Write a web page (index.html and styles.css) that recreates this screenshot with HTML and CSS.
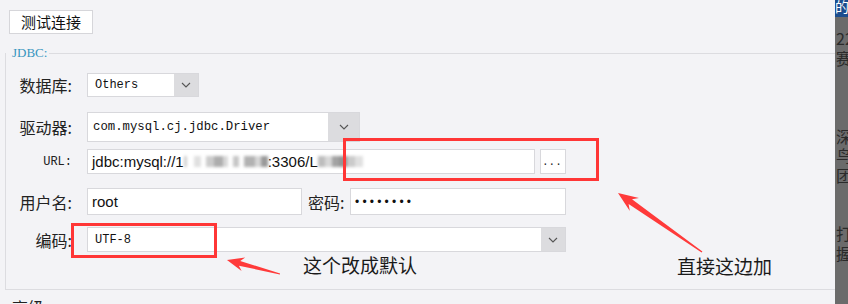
FILE: index.html
```html
<!DOCTYPE html>
<html lang="zh-CN">
<head>
    <meta charset="UTF-8">
    <meta name="viewport" content="width=device-width, initial-scale=1.0">
    <title>数据连接</title>
    <link rel="stylesheet" href="styles.css">
</head>
<body>
<div class="window">
    <div class="main">
        <button type="button" class="btn-test">测试连接</button>

        <fieldset class="group">
            <legend>JDBC:</legend>

            <div class="row row-db">
                <span class="label">数据库:</span>
                <div class="select select-db">
                    <span class="select-value">Others</span>
                    <span class="select-arrow">
                        <svg width="10" height="6" viewBox="0 0 10 6"><polyline points="1,1 5,5 9,1" fill="none" stroke="#555" stroke-width="1.1"/></svg>
                    </span>
                </div>
            </div>

            <div class="row row-driver">
                <span class="label">驱动器:</span>
                <div class="select select-driver">
                    <span class="select-value">com.mysql.cj.jdbc.Driver</span>
                    <span class="select-arrow">
                        <svg width="10" height="6" viewBox="0 0 10 6"><polyline points="1,1 5,5 9,1" fill="none" stroke="#555" stroke-width="1.1"/></svg>
                    </span>
                </div>
            </div>

            <div class="row row-url">
                <span class="label label-mono">URL:</span>
                <div class="field field-url">jdbc:mysql://1<span class="mosaic mosaic-host"></span>:3306/L<span class="mosaic mosaic-db"></span></div>
                <button type="button" class="btn-more">...</button>
            </div>

            <div class="row row-user">
                <span class="label">用户名:</span>
                <div class="field field-user">root</div>
                <span class="label-inline">密码:</span>
                <div class="field field-pass">••••••••</div>
            </div>

            <div class="row row-encoding">
                <span class="label">编码:</span>
                <div class="select select-encoding">
                    <span class="select-value">UTF-8</span>
                    <span class="select-arrow">
                        <svg width="10" height="6" viewBox="0 0 10 6"><polyline points="1,1 5,5 9,1" fill="none" stroke="#555" stroke-width="1.1"/></svg>
                    </span>
                </div>
            </div>
        </fieldset>

        <div class="section-title">高级</div>
    </div>

    <div class="side">
        <div class="side-head">的</div>
        <div class="side-text">22
赛



深
鸟
团


打
握</div>
    </div>

    <!-- screenshot annotations -->
    <svg class="marks" width="848" height="304" viewBox="0 0 848 304">
        <rect x="344.5" y="139.5" width="253" height="40" fill="none" stroke="#ff3636" stroke-width="3"/>
        <rect x="72.5" y="224.5" width="143" height="32" fill="none" stroke="#ff3636" stroke-width="3"/>
        <polygon fill="#ff3a3a" points="280.1,273.5 240.2,260.9 245.2,257.6 227,260 241.6,271.1 238.9,265.7 279.9,274.5"/>
        <polygon fill="#ff3a3a" points="702.4,251.4 632.0,199.2 639.0,197.9 618,193 629.8,211.0 628.6,204.1 701.6,252.6"/>
    </svg>
    <div class="note note-encoding">这个改成默认</div>
    <div class="note note-url">直接这边加</div>
</div>
</body>
</html>
```

FILE: styles.css
```css
* {
    box-sizing: border-box;
}

body {
    margin: 0;
    background: #f3f3f6;
    font-family: "Noto Sans CJK SC", sans-serif;
    color: #1e1e1e;
}

.window {
    position: relative;
    display: flex;
    height: 304px;
    overflow: hidden;
}

.main {
    flex: 1;
    min-width: 0;
    padding: 10px 0 0 5px;
}

.btn-test {
    display: block;
    margin-left: 4px;
    width: 84px;
    height: 24px;
    padding: 0;
    background: #fff;
    border: 1px solid #d6d6da;
    font: 15px/22px "Noto Sans CJK SC", sans-serif;
    color: #111;
}

/* JDBC group */
.group {
    margin: 12px 0 0 0;
    padding: 13px 0 37px 6px;
    border: 1px solid #dcdce0;
    border-right: none;
    min-width: 0;
}

.group legend {
    margin-left: -6px;
    padding: 0 2px 0 6px;
    font: 13px/14px "Liberation Serif", serif;
    color: #3796bf;
}

.row {
    display: flex;
    align-items: center;
}

.row-db { height: 24px; }
.row-driver { height: 30px; margin-top: 15px; }
.row-url { height: 25px; margin-top: 7px; }
.row-user { height: 27px; margin-top: 14px; }
.row-encoding { height: 25px; margin-top: 12px; }

.label {
    flex-shrink: 0;
    width: 60px;
    margin-right: 15px;
    text-align: right;
    font-size: 16px;
    color: #222;
}

.label-mono {
    font: 12px "Liberation Mono", monospace;
    color: #222;
}

.label-inline {
    width: 37px;
    margin: 0 5px 0 6px;
    font-size: 16px;
    color: #222;
}

/* combo boxes */
.select {
    display: flex;
    height: 100%;
    background: #fff;
    border: 1px solid #d8d8dc;
}

.select-db { width: 112px; }
.select-driver { width: 273px; }
.select-encoding { width: 479px; }

.select-value {
    flex: 1;
    display: flex;
    align-items: center;
    padding-left: 7px;
    font: 12px "Liberation Mono", monospace;
    color: #111;
}

.select-driver .select-value {
    padding-left: 5px;
    font-size: 12.3px;
}

.select-arrow {
    width: 24px;
    display: flex;
    align-items: center;
    justify-content: center;
    background: #dcdcdf;
}

.select-driver .select-arrow {
    width: 31px;
}

/* text fields */
.field {
    display: flex;
    align-items: center;
    height: 100%;
    padding-left: 4px;
    background: #fff;
    border: 1px solid #d8d8dc;
    font: 15px "Liberation Sans", sans-serif;
    color: #111;
    white-space: nowrap;
    overflow: hidden;
}

.field-url { width: 448px; }
.field-user { width: 215px; }

.field-pass {
    width: 216px;
    font-size: 12px;
    letter-spacing: 3.2px;
}

.mosaic {
    display: inline-block;
    height: 11px;
    filter: blur(1.6px);
}

.mosaic-host {
    width: 84px;
    background: linear-gradient(90deg, #cfcfcf 0 4%, transparent 4% 12%, #e0e0e0 12% 20%, transparent 20% 26%, #cbcbcb 26% 36%, #adadad 36% 46%, #d8d8d8 46% 52%, transparent 52% 58%, #c6c6c6 58% 66%, transparent 66% 72%, #b2b2b2 72% 84%, #d6d6d6 84% 92%, #999 92% 100%);
}

.mosaic-db {
    width: 52px;
    background: linear-gradient(90deg, #bdbdbd 0 14%, #d8d8d8 14% 26%, #a2a2a2 26% 40%, #949494 40% 56%, #cacaca 56% 72%, #e0e0e0 72% 86%, transparent 86%);
}

.btn-more {
    width: 26px;
    height: 100%;
    margin-left: 5px;
    padding: 0 0 0 1px;
    background: #fff;
    border: 1px solid #d8d8dc;
    font: 11px/22px "Liberation Mono", monospace;
    color: #222;
    text-align: left;
}

.section-title {
    margin-top: 9px;
    padding-left: 7px;
    font-size: 16px;
    line-height: 16px;
    color: #222;
}

/* right edge of the next window */
.side {
    width: 13px;
    flex-shrink: 0;
    background: #6b6b6b;
    overflow: hidden;
}

.side-head {
    height: 17px;
    background: #1c4e8e;
    color: #fff;
    font-size: 14px;
    line-height: 13px;
    white-space: nowrap;
}

.side-text {
    padding: 12px 0 0 1px;
    font-size: 16px;
    line-height: 19.5px;
    color: #2a2a2a;
    white-space: pre;
}

/* annotations drawn over the screenshot */
.marks {
    position: absolute;
    left: 0;
    top: 0;
    pointer-events: none;
}

.note {
    position: absolute;
    font-size: 19px;
    line-height: 19px;
    color: #1a1a1a;
    white-space: nowrap;
}

.note-encoding {
    left: 303px;
    top: 255px;
}

.note-url {
    left: 677px;
    top: 256px;
}
```
